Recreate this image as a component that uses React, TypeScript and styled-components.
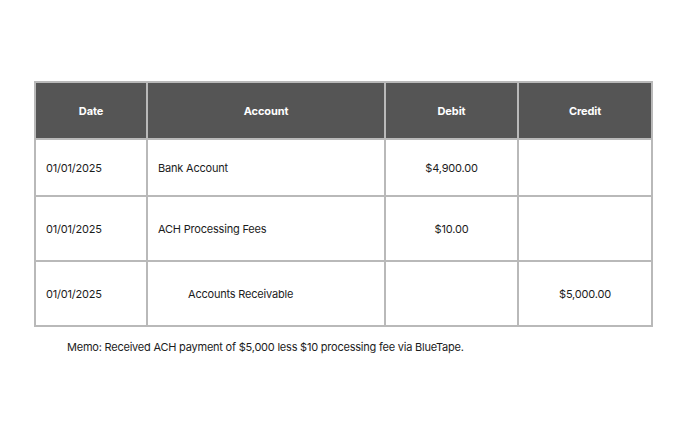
import React from "react";
import styled, { createGlobalStyle } from "styled-components";

const Global = createGlobalStyle`
  html, body { margin: 0; padding: 0; background: #ffffff; }
  body { font-family: Inter, "Noto Sans", sans-serif; color: #1a1a1a; }
`;

const Page = styled.div`
  width: 688px;
  height: 434px;
  box-sizing: border-box;
  padding: 81px 35px 0 34px;
`;

const Table = styled.table`
  width: 618px;
  border-collapse: collapse;
  table-layout: fixed;
  font-size: 11px;
`;

const HeadCell = styled.th`
  background: #555555;
  color: #ffffff;
  font-weight: 700;
  font-size: 11px;
  letter-spacing: -0.1px;
  text-align: center;
  border: 2px solid #b9b9b9;
  height: 55px;
  padding: 0;
`;

const Row = styled.tr<{ $h: number }>`
  height: ${(p) => p.$h}px;
`;

const Cell = styled.td<{ $align?: "left" | "center"; $indent?: number }>`
  border: 2px solid #b9b9b9;
  padding: 0 10px 0 ${(p) => 10 + (p.$indent ?? 0)}px;
  text-align: ${(p) => p.$align ?? "left"};
  color: #1c1c1c;
  font-size: 11px;
  letter-spacing: -0.2px;
`;

const Memo = styled.p`
  margin: 13px 0 0 33px;
  font-size: 11px;
  letter-spacing: -0.22px;
  color: #1c1c1c;
`;

const rows = [
  { date: "01/01/2025", account: "Bank Account", indent: 0, debit: "$4,900.00", credit: "", h: 57 },
  { date: "01/01/2025", account: "ACH Processing Fees", indent: 0, debit: "$10.00", credit: "", h: 65 },
  { date: "01/01/2025", account: "Accounts Receivable", indent: 30, debit: "", credit: "$5,000.00", h: 65 },
];

export default function App() {
  return (
    <Page>
      <Global />
      <Table>
        <colgroup>
          <col style={{ width: 112 }} />
          <col style={{ width: 238 }} />
          <col style={{ width: 133 }} />
          <col style={{ width: 134 }} />
        </colgroup>
        <thead>
          <tr>
            <HeadCell>Date</HeadCell>
            <HeadCell>Account</HeadCell>
            <HeadCell>Debit</HeadCell>
            <HeadCell>Credit</HeadCell>
          </tr>
        </thead>
        <tbody>
          {rows.map((r, i) => (
            <Row key={i} $h={r.h}>
              <Cell>{r.date}</Cell>
              <Cell $indent={r.indent}>{r.account}</Cell>
              <Cell $align="center">{r.debit}</Cell>
              <Cell $align="center">{r.credit}</Cell>
            </Row>
          ))}
        </tbody>
      </Table>
      <Memo>Memo: Received ACH payment of $5,000 less $10 processing fee via BlueTape.</Memo>
    </Page>
  );
}
